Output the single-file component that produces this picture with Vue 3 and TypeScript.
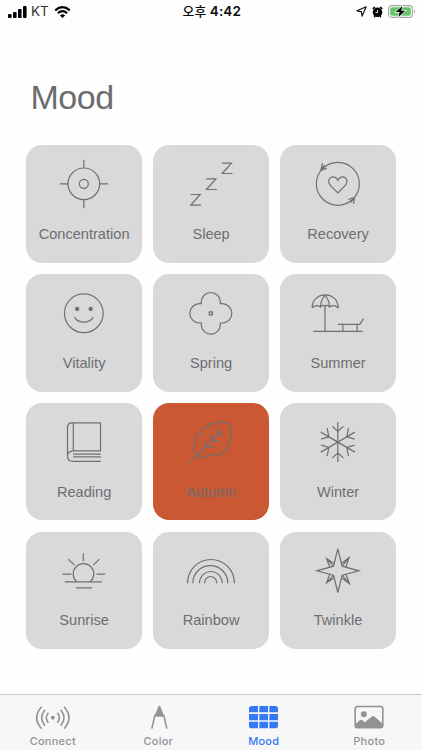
<script setup lang="ts">
import { ref } from 'vue'

interface Mood {
  name: string
  box: string
  lines: string
  dots?: [number, number, number][]
}

interface Tab {
  name: string
  box: string
  lines: string
  fill: string
}

// Icons are drawn on a grid of a third of a pixel; box is the part of it that a tile shows.
const moods: Mood[] = [
  {
    name: 'Concentration',
    box: '18.5 15.5 348 231',
    lines:
      'M192 60V85M192 180V205M120 132H145M240 132H265M144.5 132a47.5 47.5 0 1 0 95 0a47.5 47.5 0 1 0-95 0M178.5 132a13.5 13.5 0 1 0 27 0a13.5 13.5 0 1 0-27 0',
  },
  {
    name: 'Sleep',
    box: '18.5 15.5 348 231',
    lines: 'M225 70H254L226 101H257M178 117H207L179 149H210M131 164H160L132 196H163',
  },
  {
    name: 'Recovery',
    box: '18.5 15.5 348 231',
    lines:
      'M127.5 132a64.5 64.5 0 1 0 129 0a64.5 64.5 0 1 0-129 0M146 70L141 92L159 85M223 179L242 173L239 192M242 173L230 188M141 92L152 76M192 159L171 138C163 129 162 119 170 114C178 108 188 112 192 121C196 112 207 108 214 114C222 120 221 130 213 138Z',
  },
  {
    name: 'Vitality',
    box: '18.5 12 348 231',
    lines: 'M134 130a58 58 0 1 0 116 0a58 58 0 1 0-116 0M164 142C176 161 208 161 220 142',
    dots: [
      [172, 117, 6.5],
      [212.5, 117, 6.5],
    ],
  },
  {
    name: 'Spring',
    box: '399.5 12 348 231',
    lines:
      'M544.5 101V96A28.5 28.5 0 0 1 601.5 96V101H607A29 29 0 0 1 607 159H601.5V164A28.5 28.5 0 0 1 544.5 164V159H539A29 29 0 0 1 539 101ZM568.5 125.5H577.5V134.5H568.5Z',
  },
  {
    name: 'Summer',
    box: '18.5 12 348 231',
    lines:
      'M118 184H267M153.5 109V184M115 113C115 62 193 62 193 113Q180 102 167 111Q160 102 153.5 109Q147 102 140 111Q128 102 115 113M140 111Q141 88 153.5 76Q166 88 167 111M192 163H258L269 146M207 164V184M250 164V184',
  },
  {
    name: 'Reading',
    box: '18.5 8.7 348 231',
    lines:
      'M243 184H159Q143 184 143 168V82Q143 68 157 68H242V152H161Q143 153 143 168M160.5 68V152M160 162H243M160 170H243',
  },
  {
    name: 'Autumn',
    box: '399.5 8.7 348 231',
    lines:
      'M509 187L607 92M533 164A17 17 0 0 1 527 142A14 14 0 0 1 528 121A15 15 0 0 1 544 101A15 15 0 0 1 564 82A14 14 0 0 1 587 73A16 16 0 0 1 612 69A14 14 0 0 1 631 81A12 12 0 0 1 632 101A13 13 0 0 1 629 119A12 12 0 0 1 623 136A12 12 0 0 1 611 153A14 14 0 0 1 591 163A16 16 0 0 1 568 163A24 24 0 0 1 533 164M555 119L558 139L583 141M573 101L576 121L600 124M593 84L594 104L613 106',
  },
  {
    name: 'Winter',
    box: '18.5 8.7 348 231',
    lines:
      'M192 66V186M175 78L192 94L209 78M175 174L192 158L209 174M141 96L243 156M141 156L243 96M160 84L165 110L142 117M224 84L219 110L242 117M160 168L165 142L142 135M224 168L219 142L242 135',
  },
  {
    name: 'Sunrise',
    box: '18.5 11.5 348 231',
    lines:
      'M190.5 75V99M145 93L164 111M239 93L220 111M128 138H155M230 138H256M135 161H246M169 179H216M171 161A31 31 0 1 1 211 161',
  },
  {
    name: 'Rainbow',
    box: '399.5 11.5 348 231',
    lines:
      'M503 165A70.5 71 0 0 1 644 165M519 165A52.5 52.5 0 0 1 624 165M539 165A34 35 0 0 1 607 165M554 165A18.5 20 0 0 1 591 165',
  },
  {
    name: 'Twinkle',
    box: '18.5 11.5 348 231',
    lines:
      'M192 62L205 114L255 128L205 141L192 193L179 141L129 128L179 114ZM181 106L158 91L168 117M158 91L179 114M203 106L226 88L216 117M226 88L205 114M181 149L158 164L168 138M158 164L179 141M203 149L227 167L216 138M227 167L205 141',
  },
]

const tabs: Tab[] = [
  {
    name: 'Connect',
    box: '0 30 316.5 120',
    lines:
      'M125 65Q95 98 125 131M135 74Q115 98 135 122M145 83Q133 98 145 113M192 65Q222 98 192 131M182 74Q202 98 182 122M172 83Q184 98 172 113',
    fill: 'M153 98a5.5 5.5 0 1 0 11 0a5.5 5.5 0 1 0-11 0',
  },
  {
    name: 'Color',
    box: '316.5 30 316.5 120',
    lines: 'M454 131L463 92H490L499 131',
    fill: 'M473 66Q476.5 57 480 66L491 94H462Z',
  },
  {
    name: 'Mood',
    box: '633 30 316.5 120',
    lines: '',
    fill: 'M755 63H774V82H747V71Q747 63 755 63M778 63H804V82H778ZM808 63H826Q834 63 834 71V82H808ZM747 87H774V106H747ZM778 87H804V106H778ZM808 87H834V106H808ZM747 110H774V130H755Q747 130 747 122ZM778 110H804V130H778ZM808 110H834V122Q834 130 826 130H808Z',
  },
  {
    name: 'Photo',
    box: '949.5 30 316.5 120',
    lines:
      'M1071 64.5H1140Q1147 64.5 1147 71.5V121Q1147 128 1140 128H1071Q1064 128 1064 121V71.5Q1064 64.5 1071 64.5',
    fill: 'M1081 88a9 9 0 1 0 18 0a9 9 0 1 0-18 0M1064 118L1078 106Q1082 102 1086 106L1093 112L1113 95Q1118 91 1123 95L1147 117V128H1064Z',
  },
]

const selected = ref('Autumn')
const current = ref('Mood')
</script>

<template>
  <main class="screen">
    <header class="status">
      <div class="side">
        <svg class="bars" viewBox="0 0 19 12">
          <rect y="8" width="3.6" height="4" rx="1" />
          <rect x="5" y="6" width="3.6" height="6" rx="1" />
          <rect x="10" y="3" width="3.6" height="9" rx="1" />
          <rect x="15" width="3.6" height="12" rx="1" />
        </svg>
        <span class="carrier">KT</span>
        <svg class="wifi" viewBox="0 0 17 12">
          <path d="M1.2 4.3Q8.5-1.9 15.8 4.3M3.9 7.1Q8.5 3.3 13.1 7.1" />
          <path class="solid" d="M8.5 12L5.9 9.4Q8.5 7.2 11.1 9.4Z" />
        </svg>
      </div>
      <div class="time"><span class="period">오후</span> 4:42</div>
      <div class="side right">
        <svg class="arrow" viewBox="0 0 11 11"><path d="M10.2 .8L.9 4.8L5.3 5.6L6.1 10.1Z" /></svg>
        <svg class="alarm" viewBox="0 0 11 12">
          <circle cx="5.5" cy="6.3" r="4.8" />
          <path class="ears" d="M.8 2.9L2.9 1M10.2 2.9L8.1 1M2.2 11.2L3 10.2M8.8 11.2L8 10.2" />
          <path class="hands" d="M5.5 3.8V6.5H3.5" />
        </svg>
        <svg class="battery" viewBox="0 0 28 13">
          <rect class="case" x=".6" y=".6" width="23.8" height="11.8" rx="3.2" />
          <rect class="charge" x="2.2" y="2.2" width="20.6" height="8.6" rx="1.8" />
          <path class="nub" d="M26 4.3Q28 6.5 26 8.7Z" />
          <path class="bolt" d="M14.3 .9L7.7 7.1H11.6L10.4 12.1L17.3 5.7H13.3Z" />
        </svg>
      </div>
    </header>

    <h1>Mood</h1>

    <section class="grid">
      <button
        v-for="mood in moods"
        :key="mood.name"
        class="tile"
        :class="{ selected: selected === mood.name }"
        @click="selected = mood.name"
      >
        <svg class="icon" :viewBox="mood.box">
          <path :d="mood.lines" />
          <circle v-for="([x, y, r], i) in mood.dots ?? []" :key="i" :cx="x" :cy="y" :r="r" />
        </svg>
        <span class="name">{{ mood.name }}</span>
      </button>
    </section>

    <nav class="tabs">
      <button
        v-for="tab in tabs"
        :key="tab.name"
        class="tab"
        :class="{ current: current === tab.name }"
        @click="current = tab.name"
      >
        <svg class="glyph" :viewBox="tab.box">
          <path class="stroke" :d="tab.lines" />
          <path class="solid" :d="tab.fill" />
        </svg>
        <span>{{ tab.name }}</span>
      </button>
    </nav>
  </main>
</template>

<style>
body {
  background: #fefefe;
}
</style>

<style scoped>
.screen {
  display: flex;
  flex-direction: column;
  width: 422px;
  height: 750px;
  overflow: hidden;
  background: #fefefe;
  font-family: "Liberation Sans", Arial, sans-serif;
}

button {
  margin: 0;
  padding: 0;
  border: 0;
  background: none;
  font: inherit;
}

svg {
  display: block;
  flex: none;
}

.status {
  display: grid;
  grid-template-columns: 1fr auto 1fr;
  align-items: center;
  flex: none;
  height: 23px;
  padding: 0 6px 0 7.5px;
  color: #0b0b0b;
  font-family: Inter, "Noto Sans CJK KR", sans-serif;
}

.side {
  display: flex;
  align-items: center;
}

.right {
  justify-content: flex-end;
}

.bars {
  width: 19px;
  height: 12px;
  margin-right: 4.5px;
}

.carrier {
  width: 22.5px;
  font-size: 13.5px;
  line-height: 23px;
  color: #333;
}

.wifi {
  width: 17px;
  height: 12px;
}

.wifi path {
  fill: none;
  stroke: #000;
  stroke-width: 2.2;
}

.wifi .solid {
  fill: #000;
  stroke: none;
}

.time {
  font-size: 13.5px;
  font-weight: 600;
  line-height: 23px;
  letter-spacing: 0.1px;
  white-space: nowrap;
}

.period {
  font-size: 12.8px;
  font-weight: 500;
}

.arrow {
  width: 11px;
  height: 11px;
  margin-right: 5px;
}

.arrow path {
  fill: none;
  stroke: #111;
  stroke-width: 1.2;
  stroke-linejoin: round;
}

.alarm {
  width: 11px;
  height: 12px;
  margin-right: 5px;
}

.alarm .ears {
  stroke: #000;
  stroke-width: 1.5;
}

.alarm .hands {
  fill: none;
  stroke: #fff;
  stroke-width: 0.9;
}

.battery {
  width: 28px;
  height: 13px;
}

.case {
  fill: none;
  stroke: #a3a3a3;
  stroke-width: 1.1;
}

.charge {
  fill: #65c466;
}

.nub {
  fill: #a3a3a3;
}

.bolt {
  fill: #000;
  stroke: #fff;
  stroke-width: 1.2;
  paint-order: stroke;
}

h1 {
  flex: none;
  margin: 54px 0 0 30.5px;
  height: 68.2px;
  color: #6b6c6f;
  font-size: 34px;
  font-weight: 400;
  line-height: 40px;
  letter-spacing: -0.5px;
}

.grid {
  display: grid;
  grid-template-columns: repeat(3, 115.8px);
  grid-auto-rows: 117.3px;
  gap: 11.5px 11.2px;
  flex: none;
  margin-top: 0.3px;
  margin-left: 26.2px;
}

.tile {
  display: flex;
  flex-direction: column;
  align-items: center;
  border-radius: 16px;
  background: #d9d9d9;
  color: #6d6e71;
}

.tile.selected {
  background: #c95833;
}

.icon {
  width: 116px;
  height: 77px;
}

.icon path {
  fill: none;
  stroke: #6f7073;
  stroke-width: 3.7;
}

.icon circle {
  fill: #6d6e71;
}

.name {
  margin-top: 1.6px;
  font-size: 14.6px;
  line-height: 20px;
}

.tabs {
  display: grid;
  grid-template-columns: repeat(4, 1fr);
  flex: none;
  height: 56px;
  margin-top: auto;
  border-top: 1px solid #cacaca;
  background: #f7f7f7;
  box-sizing: border-box;
}

.tab {
  display: flex;
  flex-direction: column;
  align-items: center;
  color: #939393;
  font-family: Inter, sans-serif;
  font-size: 11px;
  font-weight: 500;
  line-height: 14px;
  letter-spacing: 0.25px;
}

.tab span {
  margin-top: -1px;
}

.tab.current {
  color: #3478f2;
}

.glyph {
  width: 105.5px;
  height: 40px;
}

.stroke {
  fill: none;
  stroke: currentColor;
  stroke-width: 4.8;
}

.solid {
  fill: currentColor;
}
</style>
